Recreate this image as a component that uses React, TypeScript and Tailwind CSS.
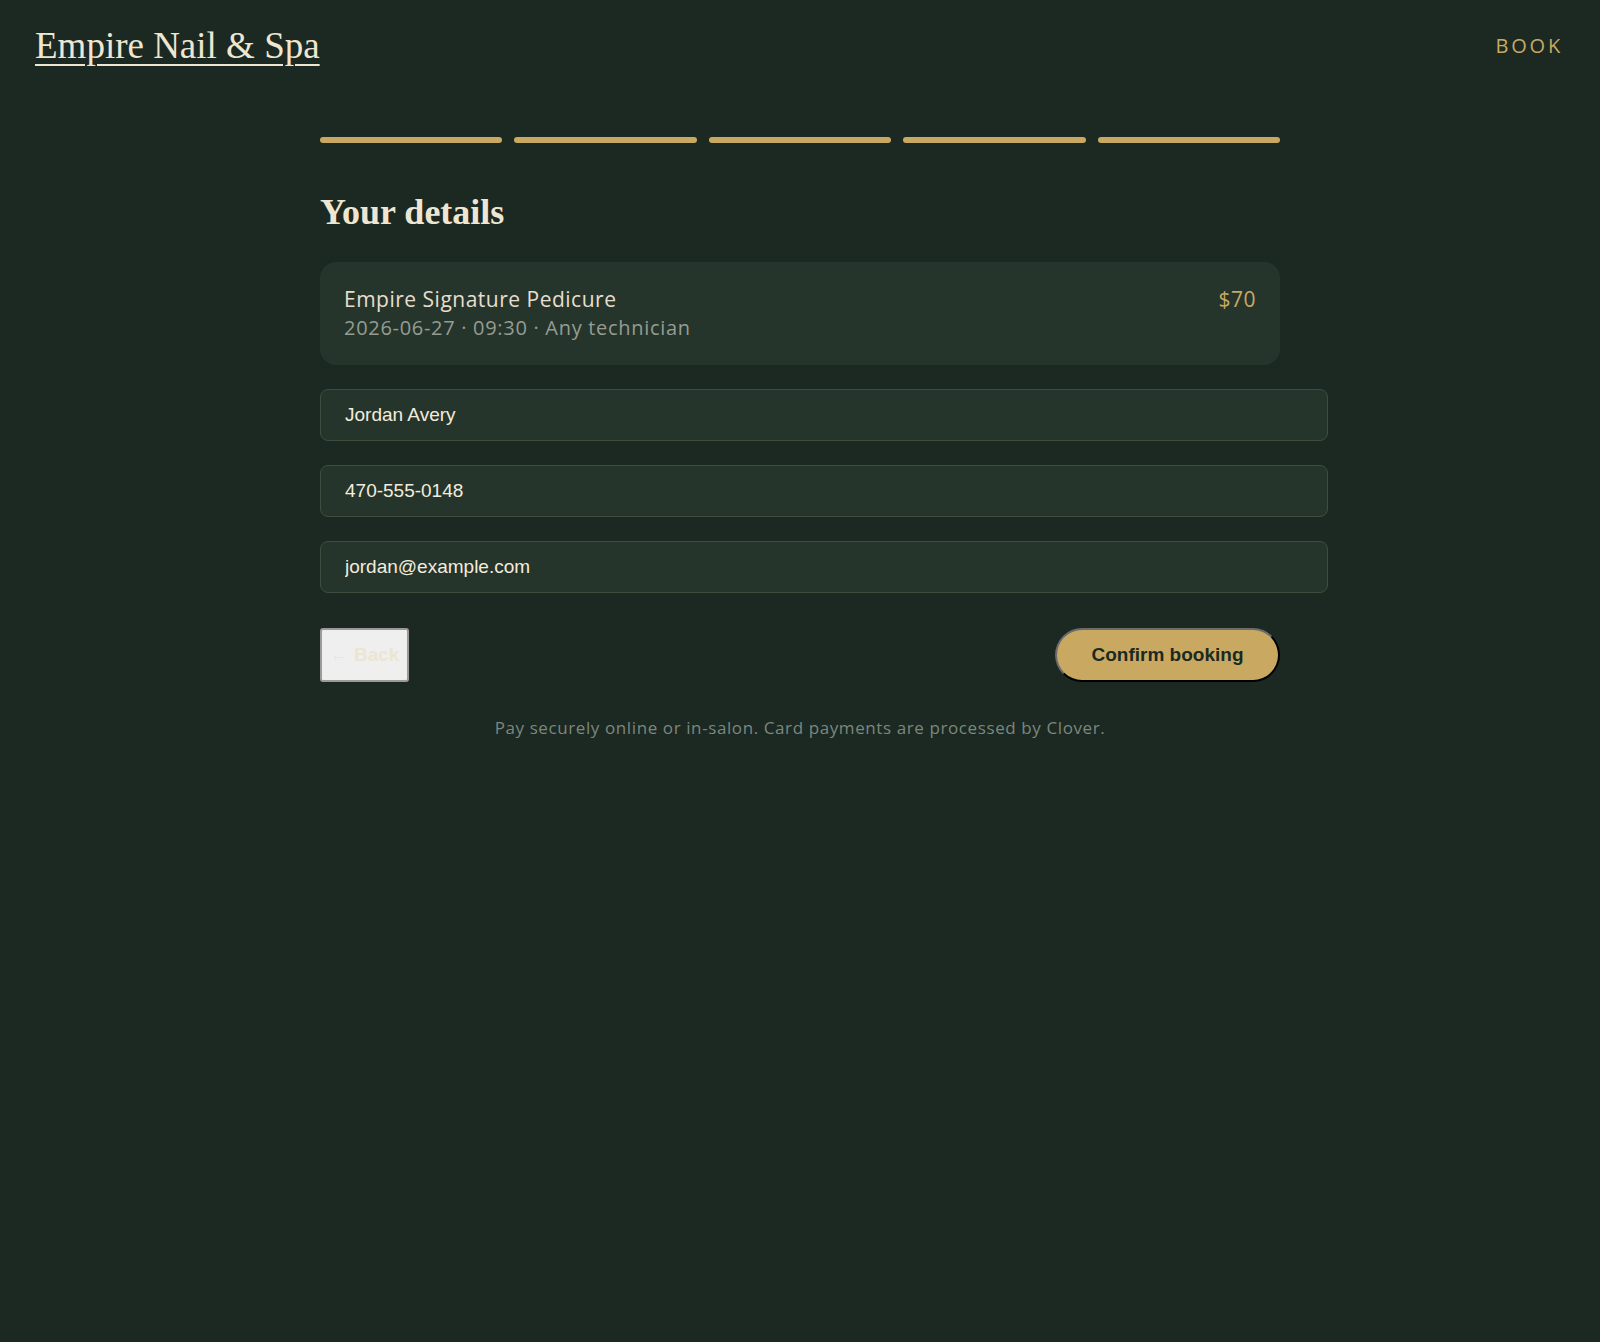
import { useState } from 'react'

const steps = [1, 2, 3, 4, 5]

export default function App() {
  const [name, setName] = useState('Jordan Avery')
  const [phone, setPhone] = useState('470-555-0148')
  const [email, setEmail] = useState('jordan@example.com')

  return (
    <div className="min-h-screen bg-[#1b2922] text-[#efe6d2] font-['Open_Sans',sans-serif]">
      <header className="flex items-center justify-between pl-[35px] pr-[37px] pt-[24px]">
        <a href="#" className="font-['Liberation_Serif',serif] text-[37px] leading-[44px] text-[#efe6d2] underline decoration-2 underline-offset-[6px]">
          Empire Nail &amp; Spa
        </a>
        <a href="#" className="text-[20px] tracking-[0.14em] text-[#c9a961]">
          BOOK
        </a>
      </header>

      <main className="mx-auto w-[960px]">
        <div className="mt-[69px] flex gap-3">
          {steps.map((step) => (
            <div key={step} className="h-[6px] flex-1 rounded-full bg-[#c9a961]" />
          ))}
        </div>

        <h2 className="mt-[47px] font-['Liberation_Serif',serif] text-[36px] font-bold leading-[44px] text-[#efe6d2]">
          Your details
        </h2>

        <div className="mt-[28px] flex items-start justify-between rounded-2xl bg-[#26352c] px-6 py-[23px]">
          <div>
            <div className="text-[21px] leading-[28px] tracking-[0.5px] text-[#e6dfcd]">Empire Signature Pedicure</div>
            <div className="text-[20px] leading-[29px] tracking-[0.7px] text-[#959c92]">2026-06-27 · 09:30 · Any technician</div>
          </div>
          <div className="text-[21px] leading-[28px] tracking-[0.5px] text-[#c9a961]">$70</div>
        </div>

        <form className="mt-[24px] flex flex-col gap-6" onSubmit={(event) => event.preventDefault()}>
          <input
            type="text"
            value={name}
            onChange={(event) => setName(event.target.value)}
            className="h-[52px] w-[1008px] rounded-lg border border-[#3f4d3e] bg-[#26352c] px-6 font-['Liberation_Sans',sans-serif] text-[19px] text-[#f3ecdc] outline-none"
          />
          <input
            type="tel"
            value={phone}
            onChange={(event) => setPhone(event.target.value)}
            className="h-[52px] w-[1008px] rounded-lg border border-[#3f4d3e] bg-[#26352c] px-6 font-['Liberation_Sans',sans-serif] text-[19px] text-[#f3ecdc] outline-none"
          />
          <input
            type="email"
            value={email}
            onChange={(event) => setEmail(event.target.value)}
            className="h-[52px] w-[1008px] rounded-lg border border-[#3f4d3e] bg-[#26352c] px-6 font-['Liberation_Sans',sans-serif] text-[19px] text-[#f3ecdc] outline-none"
          />

          <div className="mt-[11px] flex items-center justify-between">
            <button
              type="button"
              className="h-[54px] w-[89px] rounded-[3px] border-2 border-[#9a9a9a] bg-[#efefef] font-['Liberation_Sans',sans-serif] text-[19px] font-bold text-[#ece5cf]"
            >
              ← Back
            </button>
            <button
              type="submit"
              className="h-[54px] w-[225px] rounded-full border-2 border-t-[#6b6b6b] border-l-[#6b6b6b] border-r-black border-b-black bg-[#c9a961] font-['Liberation_Sans',sans-serif] text-[19px] font-bold text-[#1b2922]"
            >
              Confirm booking
            </button>
          </div>
        </form>

        <p className="mt-[33px] text-center text-[17px] tracking-[0.6px] text-[#7c877e]">
          Pay securely online or in-salon. Card payments are processed by Clover.
        </p>
      </main>
    </div>
  )
}
